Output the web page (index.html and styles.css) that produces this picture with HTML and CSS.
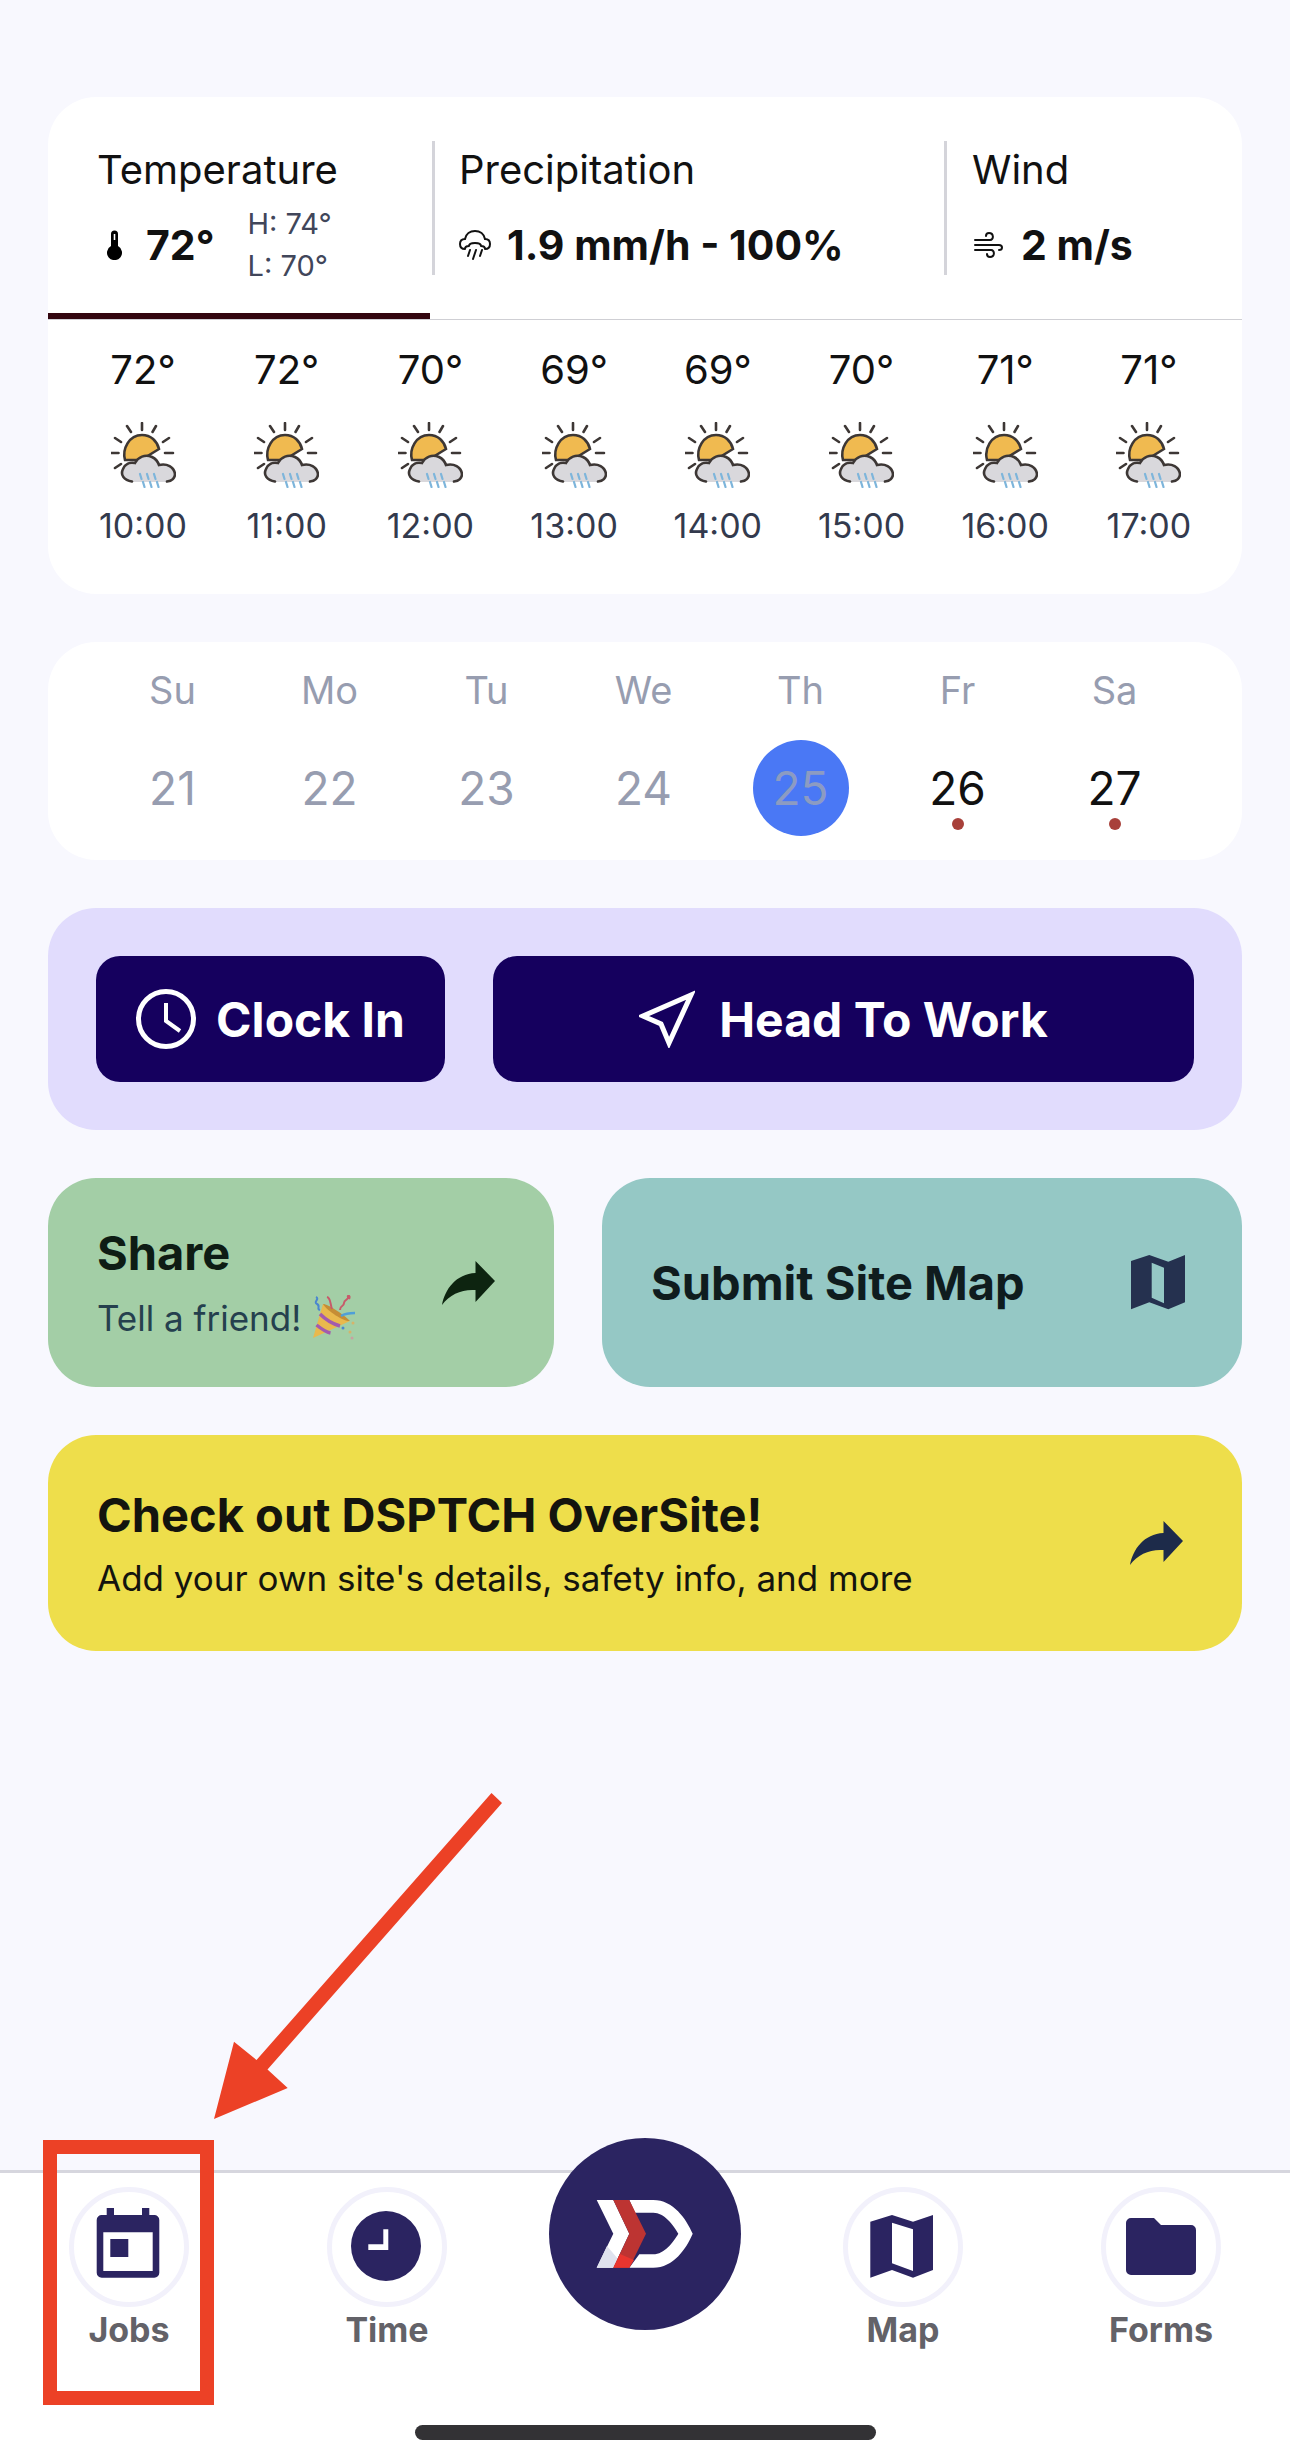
FILE: index.html
```html
<!DOCTYPE html>
<html lang="en">
<head>
  <meta charset="UTF-8" />
  <meta name="viewport" content="width=device-width, initial-scale=1.0"/>
  <title>DSPTCH - Home</title>
  <link rel="stylesheet" href="styles.css">
</head>

<body>
  <!-- Shared icons -->
  <svg class="defs" width="0" height="0">
    <symbol id="wx" viewBox="0 0 65 66">
      <g fill="none" stroke="#3d3735" stroke-width="2.6" stroke-linecap="round">
        <path d="M31 1v7M16 4l4 6M45 4l-3.500 6M4 16l6 4M58 16l-6 4M0.500 31h7M54 31h8M4 46l6-4"/>
      </g>
      <path d="M14 38C11 27 18 13 31 13c9 0 15 6 17 14L30 38Z" fill="#f0ba50" stroke="#3d3735" stroke-width="2.600"/>
      <path d="M24 60C15 60 9 54 12 47c2-5 7-7 12-6 3-6 10-9 17-6 4 2 6 5 7 8 8-2 15 2 16 9 0 5-4 8-8 8Z" fill="#d9d8dc"/>
      <path d="M21 59.500C13 58 9 53 12 47c2-5 7-7 12-6 3-6 10-9 17-6 4 2 6 5 7 8 8-2 15 2 16 9 0 4-3 7-8 7.500" fill="none" stroke="#3d3735" stroke-width="2.600" stroke-linecap="round"/>
      <path d="M29 52l1.500 5M36 52l1.500 5M43 52l1.500 5M32 60l1.500 5M39 60l1.500 5M46 60l1.500 5" fill="none" stroke="#7db5db" stroke-width="2.200" stroke-linecap="round"/>
    </symbol>
    <symbol id="go" viewBox="0 0 53 44">
      <path d="M33.500 0 53 20 33.500 41V29C20 28 8 33 0 44 3 28 14 13 33.500 12Z"/>
    </symbol>
  </svg>

  <main class="content">
    <!-- Weather -->
    <section class="card weather">
      <div class="tabs">
        <div class="tab tab-active">
          <div class="tab-title">Temperature</div>
          <div class="tab-value">
            <svg class="ico-temp" viewBox="0 0 15 30"><path d="M4 4a3.500 3.500 0 0 1 7 0v12a7.500 7.500 0 1 1-7 0Z"/><path d="M7.500 4v6" stroke="#fff" stroke-width="1.600"/></svg>
            <span class="temp-now">72°</span>
            <div class="temp-range">
              <span>H: 74°</span>
              <span>L: 70°</span>
            </div>
          </div>
        </div>
        <div class="tab-sep"></div>
        <div class="tab tab-rain">
          <div class="tab-title">Precipitation</div>
          <div class="tab-value">
            <svg class="ico-rain" viewBox="0 0 32 30"><path d="M6 19C2 19 1 16 1 14c0-3 2-5 5-5 1-5 5-8 10-8s9 3 10 8c3 0 5 2 5 5 0 2-1 5-5 5M6 19c0-2 2-3 4-3M26 19c0-2-2-3-4-3M10 16c0-2 3-3 6-3s6 1 6 3M11 20l-2 6M17 20l-3 9M23 20l-2 6" fill="none" stroke="#111" stroke-width="2" stroke-linecap="round"/></svg>
            <span class="tab-num">1.9 mm/h - 100%</span>
          </div>
        </div>
        <div class="tab-sep"></div>
        <div class="tab tab-wind">
          <div class="tab-title">Wind</div>
          <div class="tab-value">
            <svg class="ico-wind" viewBox="0 0 29 28"><path d="M1 9h15c4 0 4-7-1-7-2 0-3 1-3 3M1 14h24c4 0 4 5 0 5M1 19h16c4 0 4 7-1 7-2 0-3-1-3-3" fill="none" stroke="#111" stroke-width="2" stroke-linecap="round"/></svg>
            <span class="tab-num">2 m/s</span>
          </div>
        </div>
      </div>
      <div class="hours">
        <div class="hour"><span class="hour-temp">72°</span><svg class="wx"><use href="#wx"/></svg><span class="hour-time">10:00</span></div>
        <div class="hour"><span class="hour-temp">72°</span><svg class="wx"><use href="#wx"/></svg><span class="hour-time">11:00</span></div>
        <div class="hour"><span class="hour-temp">70°</span><svg class="wx"><use href="#wx"/></svg><span class="hour-time">12:00</span></div>
        <div class="hour"><span class="hour-temp">69°</span><svg class="wx"><use href="#wx"/></svg><span class="hour-time">13:00</span></div>
        <div class="hour"><span class="hour-temp">69°</span><svg class="wx"><use href="#wx"/></svg><span class="hour-time">14:00</span></div>
        <div class="hour"><span class="hour-temp">70°</span><svg class="wx"><use href="#wx"/></svg><span class="hour-time">15:00</span></div>
        <div class="hour"><span class="hour-temp">71°</span><svg class="wx"><use href="#wx"/></svg><span class="hour-time">16:00</span></div>
        <div class="hour"><span class="hour-temp">71°</span><svg class="wx"><use href="#wx"/></svg><span class="hour-time">17:00</span></div>
      </div>
    </section>

    <!-- Week strip -->
    <section class="card week">
      <div class="day"><span class="day-name">Su</span><span class="day-num">21</span></div>
      <div class="day"><span class="day-name">Mo</span><span class="day-num">22</span></div>
      <div class="day"><span class="day-name">Tu</span><span class="day-num">23</span></div>
      <div class="day"><span class="day-name">We</span><span class="day-num">24</span></div>
      <div class="day"><span class="day-name">Th</span><span class="day-num today">25</span></div>
      <div class="day"><span class="day-name">Fr</span><span class="day-num has-job">26</span></div>
      <div class="day"><span class="day-name">Sa</span><span class="day-num has-job">27</span></div>
    </section>

    <!-- Clock in -->
    <section class="actions">
      <button class="action action-clock">
        <svg class="ico-clock" viewBox="0 0 60 60"><circle cx="30" cy="30" r="27.500"/><path d="M30 14v18l14 10"/></svg>
        Clock In
      </button>
      <button class="action action-head">
        <svg class="ico-nav" viewBox="0 0 56 58"><path d="M52 5 4 26l18 8 8 19Z"/></svg>
        Head To Work
      </button>
    </section>

    <div class="promo-row">
      <div class="promo promo-share">
        <div>
          <div class="promo-title">Share</div>
          <div class="promo-sub">Tell a friend!
            <svg class="ico-party" viewBox="0 0 47 45">
              <path d="M2 43 12 9l27 17Z" fill="#e9b94d"/>
              <path d="M12 9c5 0 20 10 27 17-5 1-22-9-27-17Z" fill="#c58d35"/>
              <path d="M9 19c6 6 13 10 20 12M5.500 30c5 4 9 7 14 8" fill="none" stroke="#a25bae" stroke-width="3.500"/>
              <path d="M5 2c4 2-3 5 1 7s-1 5 3 6" fill="none" stroke="#4a86cf" stroke-width="2"/>
              <path d="M16 2c4 1 3 7 5 12M29 15c0-5 4-3 4-7s5-3 4-6c-1-2 3-2 1 2" fill="none" stroke="#c75a6a" stroke-width="2"/>
              <path d="M30 21c5-3 9-3 14-3" fill="none" stroke="#4f9fd8" stroke-width="2.500"/>
              <circle cx="32" cy="33" r="1.500" fill="#4a86cf"/><circle cx="39" cy="37" r="1.500" fill="#d6b36a"/><circle cx="42" cy="28" r="1.500" fill="#d6b36a"/><circle cx="41" cy="43" r="1.500" fill="#c9a0a0"/>
            </svg>
          </div>
        </div>
        <svg class="ico-go go-share"><use href="#go"/></svg>
      </div>
      <div class="promo promo-site">
        <div class="promo-title">Submit Site Map</div>
        <svg class="ico-sitemap" viewBox="0 0 54 55"><path fill-rule="evenodd" d="M0 6 18.300 0l19 6.700L54 0v47.300l-16.700 7-19-7L0 54.300ZM20.700 7.700v35l12.300 5.600V12.700Z"/></svg>
      </div>
    </div>

    <div class="promo promo-oversite">
      <div>
        <div class="promo-title">Check out DSPTCH OverSite!</div>
        <div class="promo-sub">Add your own site's details, safety info, and more</div>
      </div>
      <svg class="ico-go go-oversite"><use href="#go"/></svg>
    </div>
  </main>

  <!-- Bottom nav -->
  <nav class="tabbar">
    <div class="tabbar-items">
      <div class="nav-item">
        <div class="nav-ring">
          <svg viewBox="0 0 80 80"><path fill-rule="evenodd" d="M17.700 1H25v7h28V1h7.300v7h5a5 5 0 0 1 5 5v52.700a5 5 0 0 1-5 5H12.700a5 5 0 0 1-5-5V13a5 5 0 0 1 5-5h5ZM14.300 25.300V64h49.400V25.300Z"/><rect x="21.300" y="32" width="18" height="18"/></svg>
        </div>
        <span>Jobs</span>
      </div>
      <div class="nav-item">
        <div class="nav-ring">
          <svg viewBox="0 0 80 80"><path fill-rule="evenodd" d="M39 4a35 35 0 1 1 0 70 35 35 0 0 1 0-70ZM36.300 22.300v15H21.300V43h20V22.300Z"/></svg>
        </div>
        <span>Time</span>
      </div>
      <div class="nav-item nav-logo">
        <svg viewBox="0 0 192 192">
          <circle cx="96" cy="96" r="96" fill="#2b2461"/>
          <path d="M80.300 62h24c20 0 33 19 39.400 33.700-6.400 15-19.400 34-39.400 34h-24l10-13.400h14c11 0 20-12 25-20.600-5-8.700-14-21-25-21H86Z" fill="#fff"/>
          <path d="M47.700 62h16.600l16 33.700-16 34H47.700l16.600-34Z" fill="#fff"/>
          <path d="M47.700 129.700 58 108l11 13-4.700 8.700Z" fill="#dfe2ee"/>
          <path d="M64.300 62h16L97 95.700l-16.700 34h-16l16-34Z" fill="#bd3432"/>
          <path d="M64.300 129.700 71 116l14 6-4.700 7.700Z" fill="#e8352f"/>
        </svg>
      </div>
      <div class="nav-item">
        <div class="nav-ring">
          <svg viewBox="0 0 80 80"><path fill-rule="evenodd" d="M7.300 14.700 29 8l21 6.700L70 8v55l-20 7.700L29 63 7.300 70.700ZM29 15.700v40.600L50 64V22.300Z"/></svg>
        </div>
        <span>Map</span>
      </div>
      <div class="nav-item">
        <div class="nav-ring">
          <svg viewBox="0 0 80 80"><path d="M10 11h23l7 7h30a5 5 0 0 1 5 5v40a5 5 0 0 1-5 5H10a5 5 0 0 1-5-5V16a5 5 0 0 1 5-5Z"/></svg>
        </div>
        <span>Forms</span>
      </div>
    </div>
    <div class="home-bar"></div>
  </nav>

  <!-- Red annotation drawn over the screenshot -->
  <div class="mark-box"></div>
  <svg class="mark-arrow" viewBox="0 0 1290 2463"><path d="M214 2119 234 2041.700 256.500 2060 491.500 1793 502 1803 267.500 2069.500 287.700 2088Z"/></svg>
</body>
</html>
```

FILE: styles.css
```css
* {
  box-sizing: border-box;
}

body {
  margin: 0;
  width: 1290px;
  height: 2463px;
  display: flex;
  flex-direction: column;
  position: relative;
  overflow: hidden;
  font-family: Inter, "Liberation Sans", sans-serif;
  color: #111;
  background: #f8f8fe;
}

.defs {
  position: absolute;
}

.content {
  flex: 1;
  padding: 97px 48px 0;
  display: flex;
  flex-direction: column;
  gap: 48px;
}

.card {
  background: #fff;
  border-radius: 48px;
}

/* Weather */
.weather {
  height: 497px;
}

.tabs {
  height: 223px;
  display: flex;
  border-bottom: 1px solid #cfcfd4;
}

.tab {
  padding-top: 49px;
}

.tab-active {
  width: 382px;
  height: 222px;
  padding-left: 49px;
  border-bottom: 6px solid #33060f;
}

.tab-sep {
  width: 3px;
  height: 134px;
  margin: 44px 0 0 2px;
  background: #d4d4da;
}

.tab-rain {
  width: 507px;
  padding-left: 24px;
}

.tab-wind {
  padding-left: 25px;
}

.tab-title {
  font-size: 40px;
  line-height: 48px;
}

.tab-value {
  height: 84px;
  margin-top: 9px;
  display: flex;
  align-items: center;
}

.ico-temp {
  width: 15px;
  height: 30px;
  margin: 0 24px 0 10px;
}

.temp-now,
.tab-num {
  font-size: 41px;
  font-weight: 700;
  line-height: 48px;
}

.temp-range {
  margin-left: 33px;
  display: flex;
  flex-direction: column;
  font-size: 29px;
  line-height: 42px;
  color: #41465a;
}

.ico-rain {
  width: 32px;
  height: 30px;
  margin-right: 16px;
}

.ico-wind {
  width: 29px;
  height: 28px;
  margin: 0 18px 0 2px;
}

.hours {
  padding: 26px 47px 0 49px;
  display: flex;
  justify-content: space-between;
}

.hour {
  width: 92px;
  display: flex;
  flex-direction: column;
  align-items: center;
}

.hour-temp {
  font-size: 40px;
  line-height: 48px;
}

.wx {
  width: 65px;
  height: 66px;
  margin-top: 28px;
}

.hour-time {
  margin-top: 17px;
  font-size: 34px;
  line-height: 42px;
  color: #333a4d;
}

/* Week strip */
.week {
  height: 218px;
  padding: 24px 48px 0 46px;
  display: grid;
  grid-template-columns: repeat(7, 157px);
}

.day {
  display: flex;
  flex-direction: column;
  align-items: center;
}

.day-name {
  font-size: 38px;
  line-height: 48px;
  color: #979db0;
}

.day-num {
  position: relative;
  width: 96px;
  height: 96px;
  margin-top: 26px;
  font-size: 46px;
  line-height: 96px;
  text-align: center;
  color: #979db0;
}

.today {
  border-radius: 50%;
  background: #4a78f5;
  color: #8c9bc2;
}

.has-job {
  color: #111;
}

.has-job::after {
  content: "";
  position: absolute;
  left: 42px;
  top: 78px;
  width: 12px;
  height: 12px;
  border-radius: 50%;
  background: #a8403a;
}

/* Clock in */
.actions {
  height: 222px;
  padding: 48px;
  display: flex;
  gap: 48px;
  background: #e1dcfd;
  border-radius: 48px;
}

.action {
  height: 126px;
  padding: 0;
  display: flex;
  align-items: center;
  justify-content: center;
  border: none;
  border-radius: 24px;
  background: #15005e;
  color: #fff;
  font-family: inherit;
  font-size: 48px;
  font-weight: 700;
}

.action-clock {
  width: 349px;
  gap: 20px;
}

.action-head {
  flex: 1;
  gap: 24px;
}

.ico-clock {
  width: 60px;
  height: 60px;
  fill: none;
  stroke: #fff;
  stroke-width: 5px;
}

.ico-clock path {
  stroke-width: 4px;
}

.ico-nav {
  width: 56px;
  height: 58px;
  fill: none;
  stroke: #fff;
  stroke-width: 5px;
}

/* Promo cards */
.promo-row {
  display: grid;
  grid-template-columns: 506px 640px;
  gap: 48px;
}

.promo {
  display: flex;
  align-items: center;
  justify-content: space-between;
  padding: 0 59px 0 49px;
  border-radius: 48px;
}

.promo-share {
  height: 209px;
  background: #a3cea6;
  color: #0e1c14;
}

.promo-site {
  height: 209px;
  padding-right: 57px;
  background: #95c8c5;
  color: #0f1c1e;
}

.promo-oversite {
  height: 216px;
  background: #eede4b;
  color: #14140e;
}

.promo-title {
  font-size: 47px;
  font-weight: 700;
  line-height: 56px;
}

.promo-sub {
  margin-top: 14px;
  font-size: 35px;
  line-height: 42px;
}

.promo-share .promo-sub {
  color: #25404e;
}

.ico-party {
  width: 47px;
  height: 45px;
  vertical-align: -9px;
}

.ico-go {
  width: 53px;
  height: 44px;
}

.go-share {
  fill: #0d2410;
}

.go-oversite {
  height: 46px;
  fill: #1d2b4a;
}

.ico-sitemap {
  width: 54px;
  height: 55px;
  fill: #25314f;
}

/* Bottom nav */
.tabbar {
  height: 293px;
  padding-top: 14px;
  background: #fff;
  border-top: 3px solid #d6d6de;
}

.tabbar-items {
  display: grid;
  grid-template-columns: repeat(5, 258px);
}

.nav-item {
  display: flex;
  flex-direction: column;
  align-items: center;
  gap: 3px;
  font-size: 34px;
  font-weight: 700;
  line-height: 40px;
  color: #636268;
}

.nav-ring {
  width: 120px;
  height: 120px;
  display: flex;
  align-items: center;
  justify-content: center;
  border: 5px solid #f2f1fb;
  border-radius: 50%;
}

.nav-ring svg {
  width: 80px;
  height: 80px;
  fill: #2b2461;
}

.nav-logo svg {
  width: 192px;
  height: 192px;
  margin-top: -49px;
}

.home-bar {
  width: 461px;
  height: 15px;
  margin: 75px auto 0;
  border-radius: 8px;
  background: #333235;
}

/* Annotation */
.mark-box {
  position: absolute;
  left: 43px;
  top: 2140px;
  width: 171px;
  height: 265px;
  border: 14px solid #ec4126;
}

.mark-arrow {
  position: absolute;
  left: 0;
  top: 0;
  width: 1290px;
  height: 2463px;
  fill: #ec4126;
}
```
